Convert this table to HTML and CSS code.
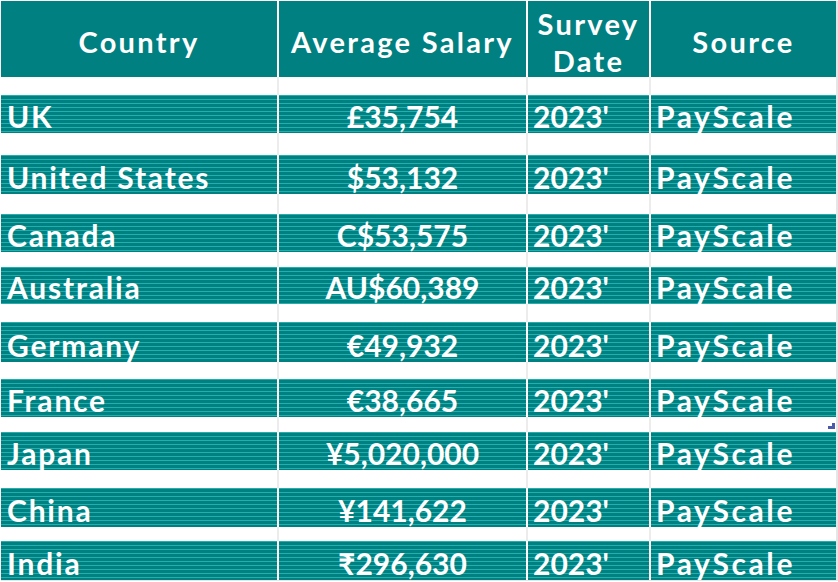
FILE: index.html
```html
<!DOCTYPE html>
<html lang="en">
<head>
<meta charset="utf-8">
<title>Average Salary by Country</title>
<link rel="stylesheet" href="styles.css">
</head>
<body>
<div class="sheet">
  <div class="hd">Country</div>
  <div class="hd">Average Salary</div>
  <div class="hd two">Survey<br>Date</div>
  <div class="hd last">Source</div>

  <div class="gap"></div><div class="gap"></div><div class="gap"></div><div class="gap last"></div>
  <div class="cell name">UK</div><div class="cell sal">£35,754</div><div class="cell date">2023'</div><div class="cell src last">PayScale</div>

  <div class="gap"></div><div class="gap"></div><div class="gap"></div><div class="gap last"></div>
  <div class="cell name">United States</div><div class="cell sal">$53,132</div><div class="cell date">2023'</div><div class="cell src last">PayScale</div>

  <div class="gap"></div><div class="gap"></div><div class="gap"></div><div class="gap last"></div>
  <div class="cell name">Canada</div><div class="cell sal">C$53,575</div><div class="cell date">2023'</div><div class="cell src last">PayScale</div>

  <div class="gap"></div><div class="gap"></div><div class="gap"></div><div class="gap last"></div>
  <div class="cell name">Australia</div><div class="cell sal">AU$60,389</div><div class="cell date">2023'</div><div class="cell src last">PayScale</div>

  <div class="gap"></div><div class="gap"></div><div class="gap"></div><div class="gap last"></div>
  <div class="cell name">Germany</div><div class="cell sal">€49,932</div><div class="cell date">2023'</div><div class="cell src last">PayScale</div>

  <div class="gap"></div><div class="gap"></div><div class="gap"></div><div class="gap last"></div>
  <div class="cell name">France</div><div class="cell sal">€38,665</div><div class="cell date">2023'</div><div class="cell src last">PayScale</div>

  <div class="gap"></div><div class="gap"></div><div class="gap"></div><div class="gap last"></div>
  <div class="cell name">Japan</div><div class="cell sal">¥5,020,000</div><div class="cell date">2023'</div><div class="cell src last">PayScale</div>

  <div class="gap"></div><div class="gap"></div><div class="gap"></div><div class="gap last"></div>
  <div class="cell name">China</div><div class="cell sal">¥141,622</div><div class="cell date">2023'</div><div class="cell src last">PayScale</div>

  <div class="gap"></div><div class="gap"></div><div class="gap"></div><div class="gap last"></div>
  <div class="cell name">India</div><div class="cell sal">₹296,630</div><div class="cell date">2023'</div><div class="cell src last">PayScale</div>
</div>
<svg class="handle" width="8" height="7" viewBox="0 0 8 7"><path d="M4 0H7V6H0V3H4Z" fill="#4b5aa8"/></svg>
</body>
</html>
```
FILE: styles.css
```css
html, body {
  margin: 0;
  padding: 0;
  background: #ffffff;
}

body {
  position: relative;
  width: 838px;
  height: 582px;
  overflow: hidden;
  font-family: "Lato", "Open Sans", "DejaVu Sans", sans-serif;
  font-weight: 700;
  color: #ffffff;
}

.sheet {
  display: grid;
  grid-template-columns: 278px 249px 123px 185px;
  grid-template-rows: 76px 18px 38px 22px 39px 20px 38px 15px 37px 18px 40px 17px 38px 15px 38px 18px 39px 14px 39px;
  margin: 1px 0 0 1px;
  width: 835px;
  border-right: 2px solid #e6e6e6;
  border-bottom: 1px solid #e6e6e6;
}

.hd {
  background: #008080;
  border-right: 2px solid #ffffff;
  display: flex;
  align-items: center;
  justify-content: center;
  text-align: center;
  font-size: 29px;
  line-height: 37px;
  letter-spacing: 2.3px;
  padding-top: 5px;
  box-sizing: border-box;
  white-space: nowrap;
}

.hd.two {
  padding-top: 6px;
}

.gap {
  background: #ffffff;
  border-right: 2px solid #ececec;
}

.cell {
  background: repeating-linear-gradient(to bottom, #22b0ae 0, #22b0ae 1px, #008080 1px, #008080 4px);
  border-right: 2px solid #ffffff;
  display: flex;
  align-items: flex-end;
  font-size: 30px;
  line-height: 30px;
  padding-bottom: 2px;
  box-sizing: border-box;
  white-space: nowrap;
}

.last {
  border-right: none;
}

.name {
  padding-left: 6px;
  letter-spacing: 1.8px;
}

.sal {
  justify-content: center;
}

.date {
  padding-left: 5px;
}

.src {
  padding-left: 5px;
  letter-spacing: 2.6px;
}

.handle {
  position: absolute;
  left: 828px;
  top: 423px;
}
```
